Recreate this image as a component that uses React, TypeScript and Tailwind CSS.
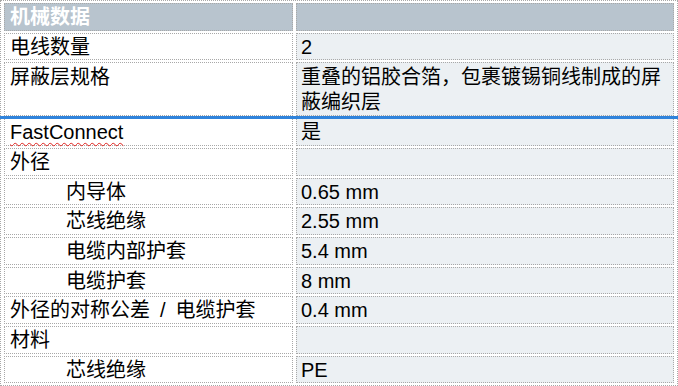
import React from 'react';

type Row = {
  label: string;
  value: string;
  indent?: boolean;
  spell?: boolean;
  tall?: boolean;
};

const rows: Row[] = [
  { label: '电线数量', value: '2' },
  {
    label: '屏蔽层规格',
    value: '重叠的铝胶合箔，包裹镀锡铜线制成的屏蔽编织层',
    tall: true,
  },
  { label: 'FastConnect', value: '是', spell: true },
  { label: '外径', value: '' },
  { label: '内导体', value: '0.65 mm', indent: true },
  { label: '芯线绝缘', value: '2.55 mm', indent: true },
  { label: '电缆内部护套', value: '5.4 mm', indent: true },
  { label: '电缆护套', value: '8 mm', indent: true },
  { label: '外径的对称公差\u2002/\u2002电缆护套', value: '0.4 mm' },
  { label: '材料', value: '' },
  { label: '芯线绝缘', value: 'PE', indent: true },
];

const cell =
  'border border-dotted border-[#a8a8a8] align-top pt-[2px] whitespace-normal';

const App = () => {
  return (
    <div
      className="relative h-[386px] w-[678px] overflow-hidden bg-white text-[20px] text-black"
      style={{
        fontFamily:
          '"Liberation Sans", "Noto Sans CJK SC", sans-serif',
      }}
    >
      <table className="w-full table-fixed border-separate border-spacing-x-[3px] border-spacing-y-[2px] border border-dotted border-[#a8a8a8]">
        <colgroup>
          <col className="w-[289px]" />
          <col />
        </colgroup>
        <tbody>
          <tr className="leading-[23.67px]">
            <td
              className={`${cell} bg-[#b8c4ce] pl-[5px] font-bold text-white`}
            >
              机械数据
            </td>
            <td className={`${cell} bg-[#b8c4ce]`} />
          </tr>
          {rows.map((row, i) => (
            <tr
              key={i}
              className={
                row.tall ? 'leading-[25px]' : 'leading-[23.67px]'
              }
            >
              <td className={`${cell} bg-white pl-[5px]`}>
                <span
                  className={[
                    row.indent ? 'pl-[56px]' : '',
                    row.spell
                      ? 'underline decoration-wavy decoration-[#e0201c] decoration-1 underline-offset-[3px]'
                      : '',
                  ].join(' ')}
                >
                  {row.label}
                </span>
              </td>
              <td className={`${cell} bg-[#ecf0f3] pl-[4px]`}>
                {row.value}
              </td>
            </tr>
          ))}
        </tbody>
      </table>
      {/* insertion marker between rows */}
      <div className="absolute left-0 right-0 top-[116px] h-[3px] bg-[#2f83db]" />
    </div>
  );
};

export default App;
